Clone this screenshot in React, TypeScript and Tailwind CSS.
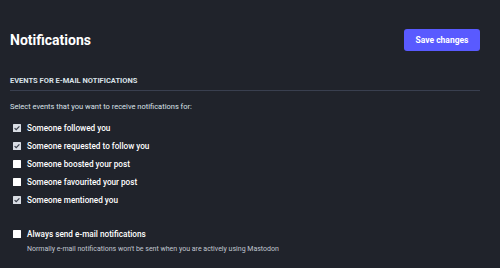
import { useState } from "react";

const events = [
  { id: "follow", label: "Someone followed you", checked: true },
  { id: "follow_request", label: "Someone requested to follow you", checked: true },
  { id: "reblog", label: "Someone boosted your post", checked: false },
  { id: "favourite", label: "Someone favourited your post", checked: false },
  { id: "mention", label: "Someone mentioned you", checked: true },
];

const Box = ({ checked }: { checked: boolean }) => (
  <svg width="8" height="8" viewBox="0 0 8 8" className="shrink-0">
    <rect x="0" y="0" width="8" height="8" rx="0.5" fill={checked ? "#d9dde4" : "#ffffff"} />
    {checked && <path d="M1.6 4.1 L3.2 5.7 L6.4 2.3" fill="none" stroke="#3a3f4b" strokeWidth="1.2" />}
  </svg>
);

const App = () => {
  const [state, setState] = useState<Record<string, boolean>>(
    Object.fromEntries(events.map(e => [e.id, e.checked]))
  );
  const [always, setAlways] = useState(false);

  return (
    <div className="w-[500px] h-[268px] bg-[#20232b] overflow-hidden font-['Roboto',sans-serif]">
      <div className="pt-[29px] pl-[10px] pr-[20px] flex flex-col">
        <div className="flex items-center justify-between h-[22px]">
          <h1 className="text-[14px] leading-none font-bold text-white">Notifications</h1>
          <button className="h-[22px] w-[76px] rounded-[3px] bg-[#595aff] text-white text-[8.5px] font-bold">Save changes</button>
        </div>

        <h2 className="mt-[25px] text-[7.5px] leading-[10px] font-bold uppercase text-[#d9e1e8]">Events for e-mail notifications</h2>
        <div className="mt-[4px] border-b border-[#393f4f]" />

        <p className="mt-[11px] text-[7.5px] leading-[10px] text-[#d9e1e8]">Select events that you want to receive notifications for:</p>

        <div className="mt-[7px] flex flex-col">
          {events.map(e => (
            <label
              key={e.id}
              onClick={() => setState({ ...state, [e.id]: !state[e.id] })}
              className="h-[18px] flex items-center gap-[6px] pl-[3px] text-[8.2px] font-medium text-white cursor-pointer"
            >
              <Box checked={state[e.id]} />
              {e.label}
            </label>
          ))}
        </div>

        <label
          onClick={() => setAlways(!always)}
          className="mt-[16px] h-[18px] flex items-center gap-[6px] pl-[3px] text-[8.2px] font-medium text-white cursor-pointer"
        >
          <Box checked={always} />
          Always send e-mail notifications
        </label>
        <p className="mt-[1px] pl-[17px] text-[7px] leading-[10px] text-[#c0c7d1]">
          Normally e-mail notifications won't be sent when you are actively using Mastodon
        </p>
      </div>
    </div>
  );
};

export default App;
